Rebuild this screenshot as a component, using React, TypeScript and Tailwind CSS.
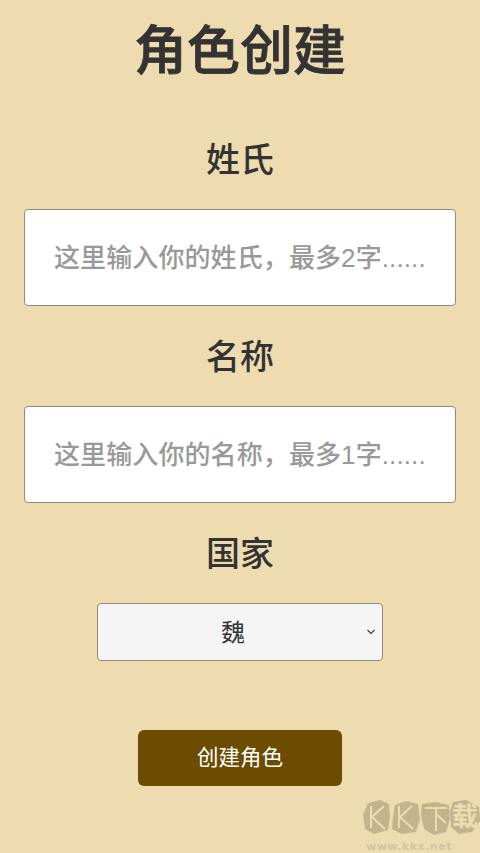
const cjk = "font-['Liberation_Sans','Noto_Sans_CJK_SC',sans-serif]";

function Watermark() {
  return (
    <div className="absolute left-[362px] top-[799px] w-[118px] h-[54px] pointer-events-none">
      <svg className="absolute left-0 top-0" width="118" height="36" viewBox="0 0 118 36">
        <path d="M6 4 L18 1 L27 5 L28 17 L26 31 L12 35 L3 30 L1 16 Z" fill="#c4b48e" />
        <path d="M33 6 L44 2 L56 5 L58 20 L54 33 L40 35 L30 30 L31 17 Z" fill="#c4b48e" />
        <path d="M60 5 L73 3 L87 6 L88 20 L84 33 L72 36 L62 30 L59 16 Z" fill="#c4b48e" />
        <path d="M91 3 L104 1 L117 8 L118 22 L110 33 L97 35 L89 28 L88 12 Z" fill="#c4b48e" />
        <path d="M9 7 L9 29 M22 7 L10 18 L23 30" stroke="#eedcb0" strokeWidth="2" fill="none" />
        <path d="M37 7 L37 29 M50 7 L38 18 L51 30" stroke="#eedcb0" strokeWidth="2" fill="none" />
        <path d="M63 9 L85 9 M74 9 L74 32 M74 15 L84 24" stroke="#eedcb0" strokeWidth="2" fill="none" />
      </svg>
      <span className={`absolute left-[90px] top-[2px] text-[26px] leading-[32px] font-bold text-[#eedcb0] ${cjk}`}>载</span>
      <div className="absolute left-[4px] top-[41px] text-[11px] leading-[13px] font-bold tracking-[0.5px] text-[#d3c4a0] font-['DejaVu_Sans',sans-serif]">www.kkx.net</div>
    </div>
  );
}

function Field({ label, placeholder }: { label: string; placeholder: string }) {
  return (
    <div className="flex flex-col">
      <label className="h-[50px] pt-[2px] flex items-center justify-center text-[34px] font-medium text-[#333]">{label}</label>
      <input
        type="text"
        placeholder={placeholder}
        className="mt-[25px] h-[97px] w-full rounded-[4px] border border-[#8f8a7c] bg-white px-[29px] pt-[2px] text-[26px] font-medium tracking-[0.1px] text-[#333] placeholder:text-[#999] outline-none"
      />
    </div>
  );
}

export default function App() {
  return (
    <div className={`relative h-[853px] w-[480px] overflow-hidden bg-[#eedcb0] px-6 ${cjk}`}>
      <h1 className="pt-[16px] h-[84px] text-center text-[53px] leading-[72px] font-medium text-[#333] [-webkit-text-stroke:0.8px_#333]">角色创建</h1>
      <div className="mt-[50px] flex flex-col gap-[25px]">
        <Field label="姓氏" placeholder="这里输入你的姓氏，最多2字......" />
        <Field label="名称" placeholder="这里输入你的名称，最多1字......" />
      </div>
      <div className="mt-[25px] h-[50px] pt-[2px] flex items-center justify-center text-[34px] font-medium text-[#333]">国家</div>
      <div className="mt-[25px] flex justify-center">
        <div className="relative">
          <select className="block h-[58px] w-[286px] appearance-none rounded-[4px] border border-[#8f8a7c] bg-[#f5f5f5] pr-[14px] pt-[2px] text-center text-[24px] text-[#333]">
            <option>魏</option>
            <option>蜀</option>
            <option>吴</option>
          </select>
          <svg className="absolute right-[8px] top-[26px]" width="8" height="6" viewBox="0 0 8 6">
            <path d="M0.5 1 L4 4.5 L7.5 1" stroke="#333" strokeWidth="1.1" fill="none" />
          </svg>
        </div>
      </div>
      <div className="mt-[69px] flex justify-center">
        <button className="h-[56px] w-[204px] rounded-[6px] bg-[#6b4c00] text-[21.5px] text-white">创建角色</button>
      </div>
      <Watermark />
    </div>
  );
}
